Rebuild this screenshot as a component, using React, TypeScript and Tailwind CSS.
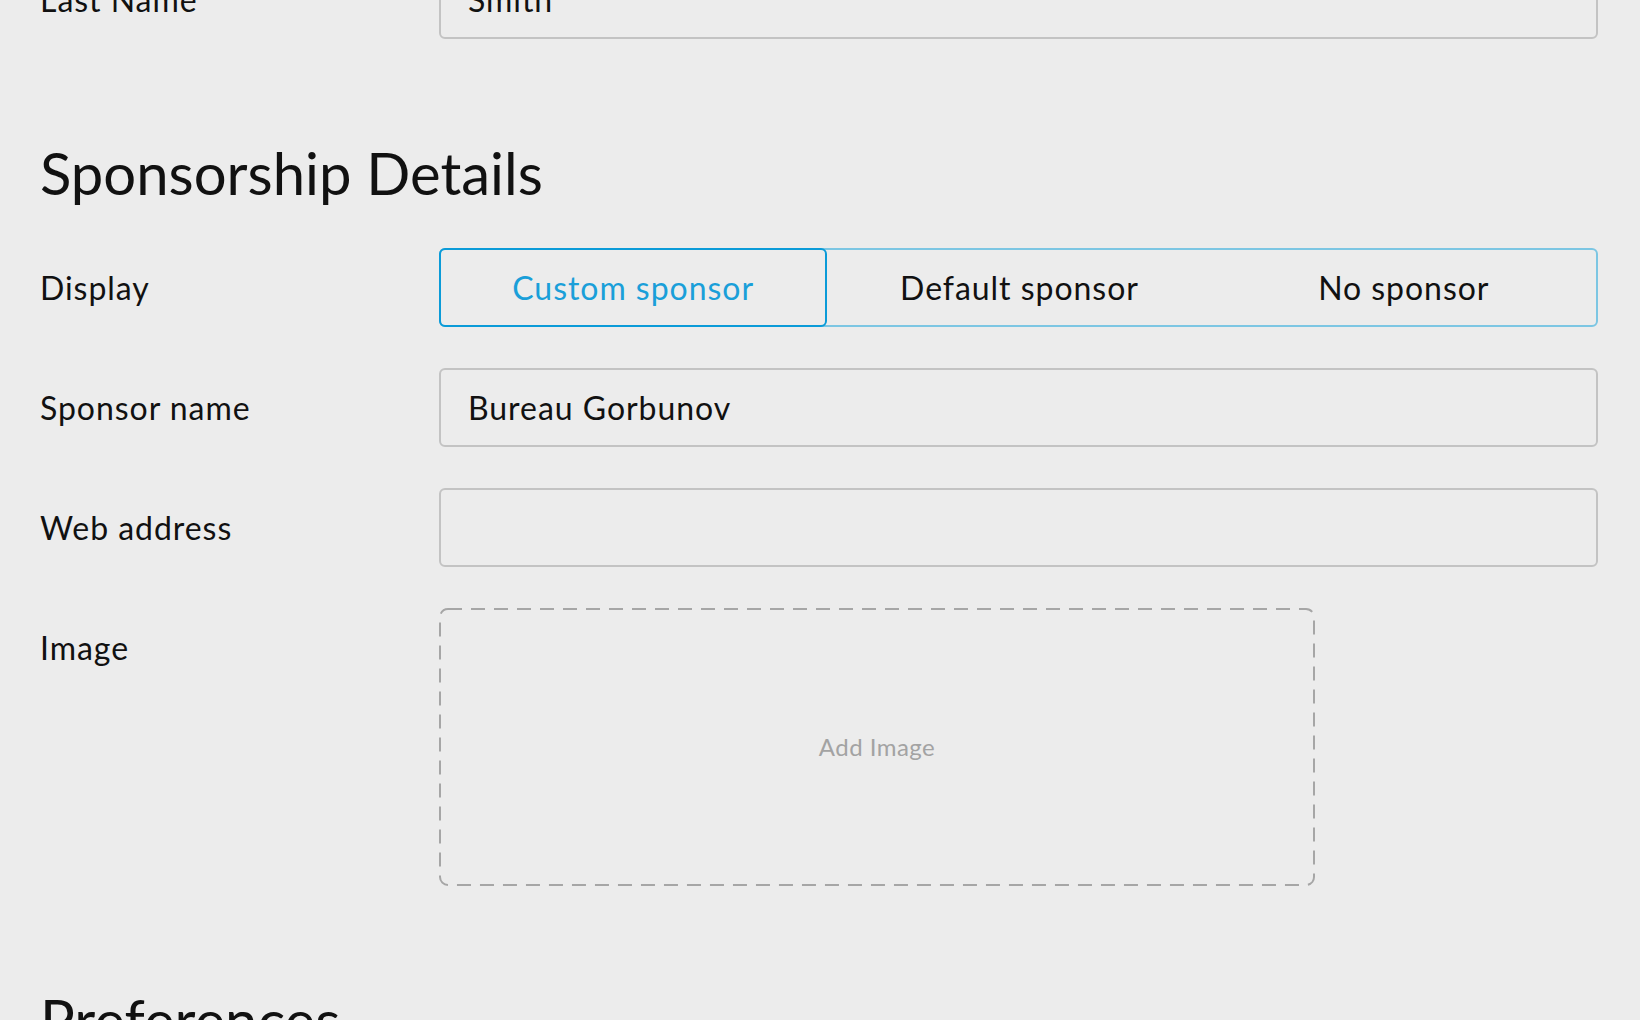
import { useState } from "react";

// Sponsorship options shown in the segmented control
const DISPLAY_OPTIONS = ["Custom sponsor", "Default sponsor", "No sponsor"];

const Row = ({ label, top = false, children }: { label: string; top?: boolean; children: React.ReactNode }) => (
  <div className="grid grid-cols-[399px_1fr]">
    <div className={`flex h-[79px] items-center text-[32px] tracking-[0.03em] text-[#111] ${top ? "self-start" : ""}`}>
      {label}
    </div>
    <div>{children}</div>
  </div>
);

const TextInput = ({ value }: { value: string }) => (
  <div className="flex h-[79px] items-center rounded-[6px] border-2 border-[#c3c3c3] px-[27px] text-[32px] tracking-[0.03em] text-[#111]">
    {value}
  </div>
);

const App = () => {
  const [display, setDisplay] = useState("Custom sponsor");

  return (
    <div className="min-h-screen overflow-hidden bg-[#ececec] pl-[40px] pr-[42px] font-['Lato',sans-serif]">
      {/* Previous section, scrolled mostly out of view */}
      <div className="-mt-[40px]">
        <Row label="Last Name">
          <TextInput value="Smith" />
        </Row>
      </div>

      {/* Sponsorship Details */}
      <h2 className="mt-[99px] text-[58px] leading-[70px] text-[#111]">Sponsorship Details</h2>

      <div className="mt-[40px] flex flex-col gap-[41px]">
        <Row label="Display">
          <div className="flex h-[79px] rounded-[6px] border-2 border-[#7cc6e3]">
            {DISPLAY_OPTIONS.map((opt, i) => {
              const active = display === opt;
              return (
                <button
                  key={opt}
                  onClick={() => setDisplay(opt)}
                  className={`flex-1 text-[32px] tracking-[0.03em] ${
                    active
                      ? `-my-[2px] rounded-[6px] border-2 border-[#0b9bd8] text-[#1a9fd9] ${i === 0 ? "-ml-[2px]" : ""}`
                      : "text-[#111]"
                  }`}
                >
                  {opt}
                </button>
              );
            })}
          </div>
        </Row>

        <Row label="Sponsor name">
          <TextInput value="Bureau Gorbunov" />
        </Row>

        <Row label="Web address">
          <TextInput value="" />
        </Row>

        <Row label="Image" top>
          <div className="relative flex h-[278px] w-[876px] items-center justify-center text-[24px] tracking-[0.02em] text-[#a3a3a3]">
            {/* dashed outline drawn so the dash length matches */}
            <svg className="pointer-events-none absolute inset-0 h-full w-full" width="876" height="278">
              <rect x="1" y="1" width="874" height="276" rx="8" fill="none" stroke="#a6a6a6" strokeWidth="2" strokeDasharray="14 9" />
            </svg>
            Add Image
          </div>
        </Row>
      </div>

      {/* Next section */}
      <h2 className="mt-[99px] text-[58px] leading-[70px] text-[#111]">Preferences</h2>
    </div>
  );
};

export default App;
